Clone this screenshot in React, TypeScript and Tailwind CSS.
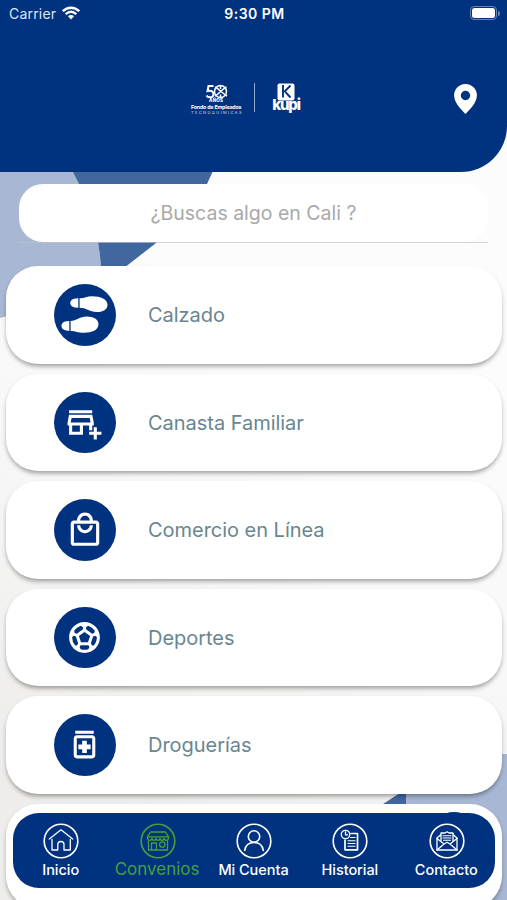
import React from "react";
import { MdOutlineAddBusiness, MdOutlineLocalMall, MdOutlineMedication, MdSportsSoccer } from "react-icons/md";

function Footprints() {
  return (
    <svg viewBox="0 0 61 61" className="size-[61px]" fill="#fff">
      <path d="M21.500 14.500 L24.300 14.200 V23.800 L21 23.400 C14.600 22.500 14.600 15 21.500 14.500Z" />
      <path d="M25.600 14.200 C30 14.400 33 12.200 38 12.200 C47 12.200 53.500 15 53.500 21 C53.500 26 48 28.300 43 28 C35 27.600 32 23.800 25.600 23.800Z" />
      <path d="M12.500 37.300 L15.300 37 V47 L12.200 46.600 C5.800 45.500 5.800 38 12.500 37.300Z" />
      <path d="M16.600 37 C22 36.700 26 32.500 32.500 32.500 C40 32.500 44.500 35.500 44.500 40.300 C44.500 46 38 48.800 30 48.800 C24 48.800 21 47 16.600 47Z" />
    </svg>
  );
}

const categories = [
  { label: "Calzado", icon: <Footprints /> },
  { label: "Canasta Familiar", icon: <MdOutlineAddBusiness size={37} /> },
  { label: "Comercio en Línea", icon: <MdOutlineLocalMall size={38} /> },
  { label: "Deportes", icon: <MdSportsSoccer size={37} /> },
  { label: "Droguerías", icon: <MdOutlineMedication size={37} /> },
];

function TabIcon({ children }: { children: React.ReactNode }) {
  return (
    <svg viewBox="0 0 36 36" className="size-9 shrink-0" fill="none" stroke="currentColor" strokeWidth="1.3" strokeLinejoin="round" strokeLinecap="round">
      <circle cx="18" cy="18" r="16.8" strokeWidth="1.6" />
      {children}
    </svg>
  );
}

const tabs = [
  {
    label: "Inicio",
    icon: (
      <>
        <path d="M6.300 16 L18 6.800 L29.700 16" />
        <path d="M9 16.500 V27 H14.800 V21.500 C14.800 17.500 21 17.500 21 21.500 V27 H27.300 V16.500" />
      </>
    ),
  },
  {
    label: "Convenios",
    active: true,
    icon: (
      <>
        <path d="M10.500 9 H25.500 L28.500 13.800 H7.500Z" />
        <path d="M7.500 14 V15.500 C8 18 11.500 18 12 15.500 C12.500 18 15.500 18 16 15.500 C16.500 18 19.500 18 20 15.500 C20.500 18 23.500 18 24 15.500 C24.500 18 28 18 28.500 15.500 V14" />
        <path d="M8.500 18 V27 H27.500 V18 M11.500 26.500 V20 H16.500 V26.500" />
        <circle cx="22.300" cy="21.500" r="2.700" />
      </>
    ),
  },
  {
    label: "Mi Cuenta",
    icon: (
      <>
        <circle cx="18" cy="13.500" r="5.700" strokeWidth="1.600" />
        <path d="M8.700 27.500 C9.500 22 13 19.500 18 19.500 C23 19.500 26.500 22 27.300 27.500" strokeWidth="1.600" />
      </>
    ),
  },
  {
    label: "Historial",
    icon: (
      <>
        <circle cx="13.500" cy="11.500" r="4.200" />
        <path d="M13.500 9 V11.800 H15.500" />
        <path d="M19 10.500 H25.500 V26.800 H13 V17" strokeWidth="1.700" />
        <path d="M18.500 14.500 H23 M16 17.700 H23 M16 20.500 H23 M16 23.300 H23" strokeWidth="1.100" />
      </>
    ),
  },
  {
    label: "Contacto",
    icon: (
      <>
        <path d="M11.500 12 L8 15 V27 H28 V15 L24.500 12" />
        <path d="M8 15.500 L15 21 L18 19.300 L21 21 L28 15.500 M8 27 L15 21 M28 27 L21 21" />
        <path d="M12 17.500 V10 H16 L18 8.800 L20 10 H24 V17.500" />
        <path d="M14 12.800 H22 M14 15 H22 M14.500 17.200 H21.500" strokeWidth="1.100" />
      </>
    ),
  },
];

// Angular brand shapes that sit behind the scrolling list.
function Backdrop() {
  return (
    <svg viewBox="0 0 507 900" className="absolute inset-0 h-[900px] w-[507px]">
      <defs>
        <linearGradient id="paper" x1="0.3" y1="0" x2="0" y2="1">
          <stop offset="0.2" stopColor="#fcfcfc" />
          <stop offset="0.5" stopColor="#f8f8f8" />
          <stop offset="0.85" stopColor="#eeedeb" />
        </linearGradient>
      </defs>
      <rect width="507" height="900" fill="url(#paper)" />
      <path d="M0 160 H68 L79 184 Q99 222 101.500 275 L60 302 L0 318Z" fill="#a8b8d4" />
      <path d="M67 160 H218 L207 184 Q188 220 156 243 L115 275 H101.500 Q99 222 79 184Z" fill="#41679f" />
      <path d="M380 806 L406 789 V806Z" fill="#41679f" />
      <path d="M406 754 H507 V900 H406Z" fill="#a8b8d4" />
    </svg>
  );
}

function StatusBar() {
  return (
    <div className="flex h-[26px] items-center justify-between pr-[7px] pl-[9px] text-[14px] text-[#dce6f5]">
      <div className="flex w-40 items-center gap-[6px]">
        <span className="pt-px tracking-[0.2px]">Carrier</span>
        <svg viewBox="0 0 18 14" className="h-[14px] w-[18px]" fill="none" stroke="#fff" strokeWidth="2.500">
          <path d="M0.800 5.200 C5.500 0.500 12.500 0.500 17.200 5.200" />
          <path d="M3.700 8.200 C7 5.100 11 5.100 14.300 8.200" />
          <path d="M9 13.500 L5.900 10.300 C7.600 8.700 10.400 8.700 12.100 10.300Z" fill="#fff" stroke="none" />
        </svg>
      </div>
      <span className="pt-px text-[14px] font-semibold tracking-[0.5px] text-white">9:30 PM</span>
      <div className="flex w-40 items-center justify-end gap-px">
        <div className="h-[14px] w-[27px] rounded-[4px] border border-[#6683b4] p-px">
          <div className="h-full rounded-[2.500px] bg-white" />
        </div>
        <div className="h-[5px] w-[2px] rounded-r-full bg-[#6683b4]" />
      </div>
    </div>
  );
}

function Brand() {
  return (
    <div className="flex items-center text-white">
      <div className="mt-[2px] flex w-[52px] flex-col items-center">
        <svg viewBox="0 0 24 18" className="h-[18px] w-6" fill="none" stroke="#fff" strokeWidth="1.500">
          <path d="M8.500 2 H3.500 L2.500 7 C10 5 10 14 5 13.300 C3.500 13.300 2 12.500 1.500 11.500" strokeWidth="2" />
          <circle cx="15.500" cy="7.600" r="6" />
          <path d="M10 3 C14 5 17 9 22 12 M21.500 3 C17 5 15 9 10 12 M15.500 2 V5 M15.500 10.500 V13" />
          <text x="11" y="18" textAnchor="middle" fontFamily="Inter" fontWeight="800" fontSize="4.500" textLength="14" fill="#fff" stroke="none">AÑOS</text>
        </svg>
        <svg viewBox="0 0 52 12" className="h-3 w-[52px]" fill="#fff" fontFamily="Inter">
          <text x="0" y="6.500" fontSize="5.300" fontWeight="700" textLength="50.500">Fondo de Empleados</text>
          <text x="0" y="11.500" fontSize="4" textLength="50.500" opacity="0.800">TECNOQUIMICAS</text>
        </svg>
      </div>
      <div className="ml-[11px] h-[29px] w-px bg-[#8fa8cc]" />
      <div className="ml-[17px] flex w-7 flex-col items-center">
        <svg viewBox="0 0 18 18" className="size-[18px]">
          <rect x="0.500" y="0.500" width="17" height="17" rx="2" fill="#fff" />
          <path d="M6 2 V14.500 M13.500 2.500 L7.800 8.300 L13.500 14.500" fill="none" stroke="#00327f" strokeWidth="1.900" />
        </svg>
        <span className="mt-[-4px] text-[15px] leading-[15px] font-extrabold tracking-[-1.200px]">kupi</span>
      </div>
    </div>
  );
}

export default function App() {
  return (
    <div className="relative h-[900px] w-[507px] overflow-hidden bg-white font-['Inter','Roboto',sans-serif]">
      <Backdrop />

      <div className="relative flex h-full flex-col">
        <header className="h-[171.5px] shrink-0 rounded-br-[46px] bg-[#00327f]">
          <StatusBar />
          <div className="grid grid-cols-[1fr_auto_1fr] items-center pt-[55px]">
            <div className="col-start-2 ml-[-16px]">
              <Brand />
            </div>
            <div className="flex justify-end pr-[30px]">
              <svg viewBox="0 0 23 30" className="mt-[3px] h-[30px] w-[23px]" fill="#fff">
                <path fillRule="evenodd" d="M11.500 0 A11.400 11.400 0 0 0 0.100 11.400 C0.100 19 8 26 11.500 30 C15 26 22.900 19 22.900 11.400 A11.400 11.400 0 0 0 11.500 0Z M11.500 6.800 A4.700 4.700 0 1 1 11.500 16.200 A4.700 4.700 0 1 1 11.500 6.800Z" />
              </svg>
            </div>
          </div>
        </header>

        <div className="mx-[19px] mt-[12.5px] h-[59px] shrink-0 border-b border-[#bfc3c9]/70">
          <div className="flex h-[58px] items-center justify-center rounded-[24px] bg-white pt-[2px] text-[19.5px] text-[#a9a9a9]">
            ¿Buscas algo en Cali ?
          </div>
        </div>

        <main className="mt-[23px] flex flex-col gap-[10px] pr-[5px] pl-[6px]">
          {categories.map((c) => (
            <div
              key={c.label}
              className="flex h-[97.5px] shrink-0 items-center rounded-[32px] bg-white pl-[48px] shadow-[0_3px_5px_-1px_rgba(0,0,0,0.4)]"
            >
              <div className="flex size-[61.500px] items-center justify-center rounded-full bg-[#00327f] text-white [&>svg]:shrink-0">{c.icon}</div>
              <span className="ml-[32.500px] pt-px text-[20px] tracking-[-0.03px] text-[#698690]">{c.label}</span>
            </div>
          ))}
          <div className="h-[104px] shrink-0 rounded-[32px] bg-white shadow-[0_3px_5px_-1px_rgba(0,0,0,0.4)]" />
        </main>
      </div>

      {/* floating tab bar, stays over the list */}
      <nav className="absolute top-[813px] left-[13px] grid h-[75px] w-[482px] grid-cols-5 rounded-[26px] bg-[#00327f]">
        <div className="absolute top-[-1px] left-[430px] h-[8px] w-[22px] rounded-[50%] bg-[#00327f]" />
        {tabs.map((t) => (
          <div key={t.label} className={`flex flex-col items-center pt-[10px] ${t.active ? "text-[#45a03c]" : "text-white"}`}>
            <TabIcon>{t.icon}</TabIcon>
            <span className={t.active ? "mr-px text-[17px] leading-5" : "mt-[1px] mr-px text-[14.5px] leading-5 font-medium tracking-[-0.05px]"}>
              {t.label}
            </span>
          </div>
        ))}
      </nav>
    </div>
  );
}
